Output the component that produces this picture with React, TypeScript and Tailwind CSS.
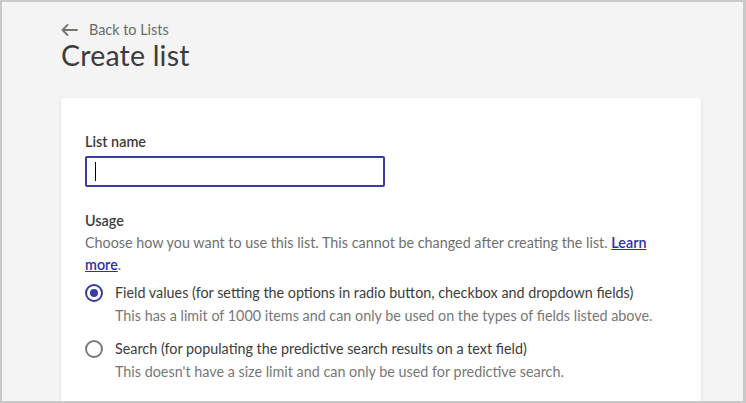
import React from "react";

export default function App() {
  const font = { fontFamily: "Lato, 'Noto Sans', sans-serif" };
  return (
    <div
      className="w-[746px] h-[403px] box-border border-2 border-r-[3px] border-[#c9c9c9] bg-[#f4f4f4] overflow-hidden text-[#3c3c3c]"
      style={font}
    >
      <div className="pl-[59px] pr-[42px] pt-[18px]">
        <div className="flex items-center gap-[11px] h-[20px] text-[#6e6a66]">
          <svg width="17" height="12" viewBox="0 0 17 12" fill="none" stroke="#7a736c" strokeWidth="1.8" strokeLinecap="round" strokeLinejoin="round">
            <path d="M16 6H1.5M6.5 1L1.5 6l5 5" />
          </svg>
          <span className="text-[14.4px] leading-[20px] text-[#6a6a6a]">Back to Lists</span>
        </div>
        <h1 className="text-[28.5px] leading-[30px] text-[#3c3c3c] tracking-[0.2px]">Create list</h1>
        <div className="mt-[28px] bg-white rounded-[3px] shadow-[0_1px_3px_rgba(0,0,0,0.12)] h-[320px] px-[24px] pt-[34px]">
          <div className="text-[14.4px] leading-[20px] font-semibold text-[#3c3c3c]">List name</div>
          <div className="mt-[4px] w-[300px] h-[31px] border-2 border-[#3b3ba6] rounded-[2px] flex items-center pl-[8px]">
            <div className="w-[1px] h-[19px] bg-black" />
          </div>
          <div className="mt-[24px] text-[14.4px] leading-[20px] font-semibold text-[#3c3c3c]">Usage</div>
          <p className="mt-[1px] text-[14.35px] leading-[22px] text-[#707070] w-[580px]">
            Choose how you want to use this list. This cannot be changed after creating the list.{" "}
            <a className="text-[#2f2fa8] underline font-semibold" href="#">Learn more</a>.
          </p>
          <div className="mt-[7px] flex flex-col gap-[13px]">
            <div className="flex">
              <div className="w-[18px] h-[18px] rounded-full border-2 border-[#3b3ba6] flex items-center justify-center mt-[1px] shrink-0">
                <div className="w-[8px] h-[8px] rounded-full bg-[#3b3ba6]" />
              </div>
              <div className="ml-[12px]">
                <div className="text-[14.35px] leading-[20px] text-[#3c3c3c]">Field values (for setting the options in radio button, checkbox and dropdown fields)</div>
                <div className="mt-[3px] text-[14.35px] leading-[20px] text-[#777777]">This has a limit of 1000 items and can only be used on the types of fields listed above.</div>
              </div>
            </div>
            <div className="flex">
              <div className="w-[18px] h-[18px] rounded-full border-2 border-[#7a7a7a] mt-[1px] shrink-0" />
              <div className="ml-[12px]">
                <div className="text-[14.35px] leading-[20px] text-[#3c3c3c]">Search (for populating the predictive search results on a text field)</div>
                <div className="mt-[3px] text-[14.35px] leading-[20px] text-[#777777]">This doesn't have a size limit and can only be used for predictive search.</div>
              </div>
            </div>
          </div>
        </div>
      </div>
    </div>
  );
}
